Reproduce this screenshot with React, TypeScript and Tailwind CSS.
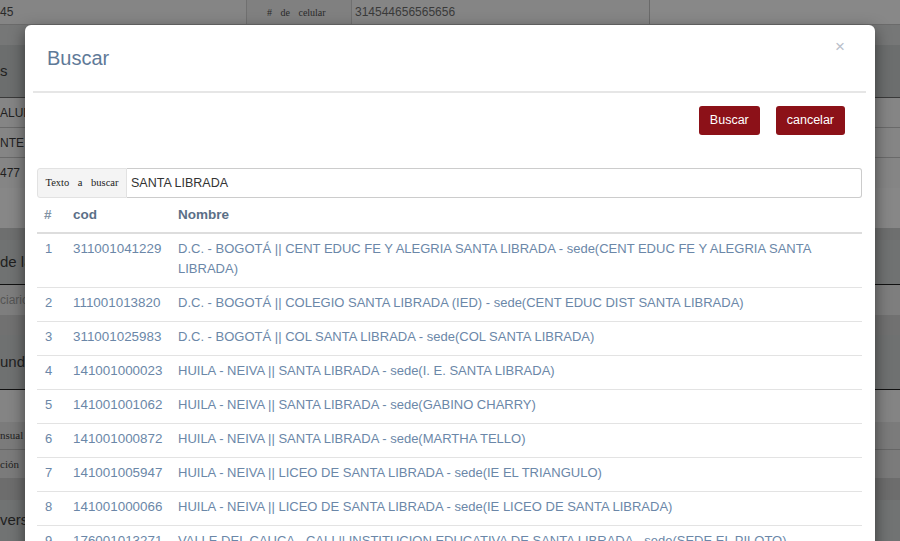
import React from "react";

const rows = [
  { cod: "311001041229", nombre: "D.C. - BOGOTÁ || CENT EDUC FE Y ALEGRIA SANTA LIBRADA - sede(CENT EDUC FE Y ALEGRIA SANTA LIBRADA)" },
  { cod: "111001013820", nombre: "D.C. - BOGOTÁ || COLEGIO SANTA LIBRADA (IED) - sede(CENT EDUC DIST SANTA LIBRADA)" },
  { cod: "311001025983", nombre: "D.C. - BOGOTÁ || COL SANTA LIBRADA - sede(COL SANTA LIBRADA)" },
  { cod: "141001000023", nombre: "HUILA - NEIVA || SANTA LIBRADA - sede(I. E. SANTA LIBRADA)" },
  { cod: "141001001062", nombre: "HUILA - NEIVA || SANTA LIBRADA - sede(GABINO CHARRY)" },
  { cod: "141001000872", nombre: "HUILA - NEIVA || SANTA LIBRADA - sede(MARTHA TELLO)" },
  { cod: "141001005947", nombre: "HUILA - NEIVA || LICEO DE SANTA LIBRADA - sede(IE EL TRIANGULO)" },
  { cod: "141001000066", nombre: "HUILA - NEIVA || LICEO DE SANTA LIBRADA - sede(IE LICEO DE SANTA LIBRADA)" },
  { cod: "176001013271", nombre: "VALLE DEL CAUCA - CALI || INSTITUCION EDUCATIVA DE SANTA LIBRADA - sede(SEDE EL PILOTO)" },
];

// filas del formulario que queda detras del modal
const fondo = [
  { h: "h-[20px]", cls: "bg-[#767777]", text: "" },
  { h: "h-[53px]", cls: "bg-[#6c6e6e] border-b border-[#3a3a3a]", text: "s", font: "text-[15px]" },
  { h: "h-[30px]", cls: "bg-[#858585] border-b border-[#6a6a6a]", text: "ALUD", font: "text-[12px]" },
  { h: "h-[30px]", cls: "bg-[#858585] border-b border-[#6a6a6a]", text: "NTE", font: "text-[12px]" },
  { h: "h-[30px]", cls: "bg-[#858585]", text: "477", font: "text-[12px]" },
  { h: "h-[40px]", cls: "bg-[#878787]", text: "" },
  { h: "h-[12px]", cls: "bg-[#6e6f6f]", text: "" },
  { h: "h-[45px]", cls: "bg-[#707272] border-b border-[#111]", text: "de la", font: "text-[15px]" },
  { h: "h-[30px]", cls: "bg-[#7e7e7e]", text: "ciario", font: "text-[12px] text-[#555]" },
  { h: "h-[20px]", cls: "bg-[#717171]", text: "" },
  { h: "h-[55px]", cls: "bg-[#6f7171] border-b border-[#111]", text: "und:", font: "text-[15px]" },
  { h: "h-[32px]", cls: "bg-[#848484]", text: "" },
  { h: "h-[28px]", cls: "bg-[#7b7b7b] border-b border-[#666]", text: "nsual", font: "text-[11px] font-['Liberation_Serif',serif]" },
  { h: "h-[28px]", cls: "bg-[#7b7b7b]", text: "ción", font: "text-[11px] font-['Liberation_Serif',serif]" },
  { h: "h-[22px]", cls: "bg-[#6d6d6d]", text: "" },
  { h: "h-[41px]", cls: "bg-[#717373]", text: "versi", font: "text-[15px]" },
];

export default function App() {
  return (
    <div className="relative w-[900px] h-[541px] overflow-hidden bg-[#828282] font-['Liberation_Sans',Arial,sans-serif]">
      <div className="flex h-[25px] border-b border-[#6b6b6b] bg-[#858585] text-[#2a2a2a]">
        <div className="w-[247px] border-r border-[#707070] flex items-center text-[12px]">45</div>
        <div className="w-[105px] flex items-center pl-[20px] bg-[#808080] text-[10px] font-['Liberation_Serif',serif] [word-spacing:6px] border-r border-[#707070]">
          # de celular
        </div>
        <div className="w-[298px] flex items-center pl-[3px] text-[12px] text-[#3a3a3a] border-r border-[#6a6a6a]">314544656565656</div>
        <div className="flex-1 bg-[#888888]" />
      </div>
      <div className="flex flex-col text-[#1f1f1f]">
        {fondo.map((f, i) => (
          <div key={i} className={`${f.h} ${f.cls} flex items-center ${f.font ?? ""}`}>
            <span className="whitespace-nowrap">{f.text}</span>
          </div>
        ))}
      </div>

      <div className="absolute left-[25px] top-[25px] w-[850px] h-[560px] bg-white rounded-[6px] shadow-[0_5px_15px_rgba(0,0,0,0.5)]">
        <div className="h-[66px] flex items-center justify-between pl-[22px] pr-[30px]">
          <h4 className="text-[20px] text-[#5f7a98] leading-none">Buscar</h4>
          <span className="text-[17px] text-[#b9c0ca] leading-none -mt-[24px]">×</span>
        </div>
        <div className="ml-[8px] mr-[9px] h-[2px] bg-[#e6e6e6]" />

        <div className="flex justify-end gap-[16px] pr-[30px] pt-[13px]">
          <button className="h-[29px] px-[11px] rounded-[3px] bg-[#8c1118] text-white text-[12.5px]">Buscar</button>
          <button className="h-[29px] px-[11px] rounded-[3px] bg-[#8c1118] text-white text-[12.5px]">cancelar</button>
        </div>

        <div className="ml-[12px] mr-[13px] mt-[33px] flex h-[30px]">
          <span className="w-[90px] flex items-center justify-center bg-[#f4f4f4] border border-[#e2e2e2] rounded-l-[3px] text-[10.5px] text-[#222] font-['Liberation_Serif',serif] [word-spacing:6px] whitespace-nowrap">
            Texto a buscar
          </span>
          <input
            type="text"
            defaultValue="SANTA LIBRADA"
            className="flex-1 border border-[#cccccc] border-l-0 rounded-r-[3px] pl-[4px] text-[12.5px] text-[#333] outline-none"
          />
        </div>

        <div className="ml-[12px] mr-[13px]">
          <table className="w-full table-fixed border-collapse text-[13px] text-[#6b87a8]">
            <colgroup>
              <col className="w-[28px]" />
              <col className="w-[105px]" />
              <col />
            </colgroup>
            <thead>
              <tr className="border-b-2 border-[#dddddd] text-[13.5px] font-bold text-[#5b6f87] text-left">
                <th className="pl-[7px] pt-[7px] pb-[7px] leading-[20px] font-bold text-[#8393a5]">#</th>
                <th className="pl-[8px] pt-[7px] pb-[7px] leading-[20px] font-bold">cod</th>
                <th className="pl-[8px] pt-[7px] pb-[7px] leading-[20px] font-bold">Nombre</th>
              </tr>
            </thead>
            <tbody>
              {rows.map((r, i) => (
                <tr key={r.cod} className={i > 0 ? "border-t border-[#e3e3e3]" : ""}>
                  <td className="pl-[8px] pt-[5px] pb-[8px] leading-[20px] align-top">{i + 1}</td>
                  <td className="pl-[8px] pt-[5px] pb-[8px] leading-[20px] align-top text-[13.4px]">{r.cod}</td>
                  <td className="pl-[8px] pr-[8px] pt-[5px] pb-[8px] leading-[20px] align-top">{r.nombre}</td>
                </tr>
              ))}
            </tbody>
          </table>
        </div>
      </div>
    </div>
  );
}
